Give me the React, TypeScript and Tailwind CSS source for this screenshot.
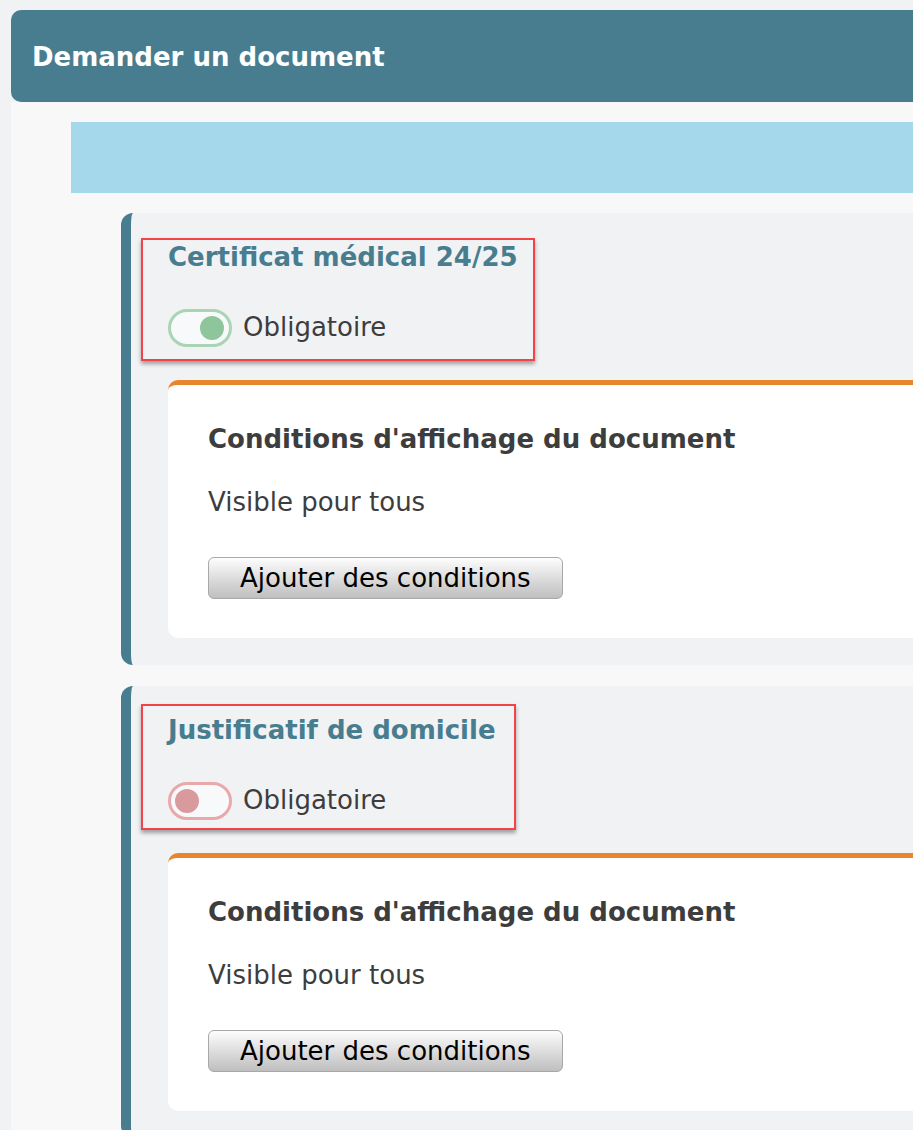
import React from 'react';

type DocItem = {
  title: string;
  required: boolean;
  mark: string;
};

const docs: DocItem[] = [
  { title: 'Certificat médical 24/25', required: true, mark: 'left-[-27px] top-0 w-[394px] h-[123px]' },
  { title: 'Justificatif de domicile', required: false, mark: 'left-[-27px] top-[-7px] w-[375px] h-[126px]' },
];

const Toggle: React.FC<{ on: boolean }> = ({ on }) => (
  <span
    className={
      on
        ? 'flex w-[64px] h-[38px] shrink-0 items-center justify-end rounded-full border-[3px] border-[#a9d5b5] bg-[#f8f9fa] pr-[5px]'
        : 'flex w-[64px] h-[38px] shrink-0 items-center justify-start rounded-full border-[3px] border-[#e9a9ab] bg-[#f8f9fa] pl-[4px]'
    }
  >
    <span className={on ? 'block w-6 h-6 rounded-full bg-[#8fc59a]' : 'block w-6 h-6 rounded-full bg-[#d99a9d]'} />
  </span>
);

const DocCard: React.FC<{ doc: DocItem }> = ({ doc }) => (
  <div className="rounded-l-[12px] border-l-[10px] border-[#487d8f] bg-[#f1f2f4] pl-[37px] pt-[25px] pb-[27px]">
    <div className="relative">
      <div className={`absolute ${doc.mark} border-2 border-[#f2434a] shadow-[0_3px_4px_rgba(0,0,0,0.35)] pointer-events-none`} />
      <h2 className="font-bold leading-[39px] text-[#487d8f]">{doc.title}</h2>
      <label className="mt-[31px] flex items-center gap-[11px] text-[#3d3d3d] leading-[39px]">
        <Toggle on={doc.required} />
        Obligatoire
      </label>
    </div>
    <div className="mt-[33px] rounded-[10px] border-t-[5px] border-[#e8862e] bg-white pl-[40px] pt-[35px] pb-[39px]">
      <h3 className="font-bold leading-[39px] text-[#3d3d3d]">Conditions d'affichage du document</h3>
      <p className="mt-[24px] leading-[39px] text-[#3d3d3d]">Visible pour tous</p>
      <button className="mt-[35px] h-[42px] px-[31px] rounded-[6px] border border-[#a8a8a8] bg-linear-to-b from-[#fdfdfd] to-[#bfbfbf] text-black leading-none">
        Ajouter des conditions
      </button>
    </div>
  </div>
);

export default function App() {
  return (
    <div className="min-h-screen overflow-hidden bg-[#f1f2f4] pt-[10px] pl-[11px] font-['DejaVu_Sans',sans-serif] text-[26px]">
      <div className="w-[1200px]">
        <header className="flex h-[92px] items-center rounded-[10px] bg-[#487d8f] pl-[21px] pt-[2px]">
          <h1 className="font-bold text-white">Demander un document</h1>
        </header>
        <div className="bg-[#f8f8f9] pl-[60px] pt-[20px]">
          <div className="h-[71px] bg-[#a4d8ea]" />
          <div className="flex flex-col gap-[21px] pl-[50px] pt-[20px]">
            {docs.map((d) => (
              <DocCard key={d.title} doc={d} />
            ))}
          </div>
        </div>
      </div>
    </div>
  );
}
